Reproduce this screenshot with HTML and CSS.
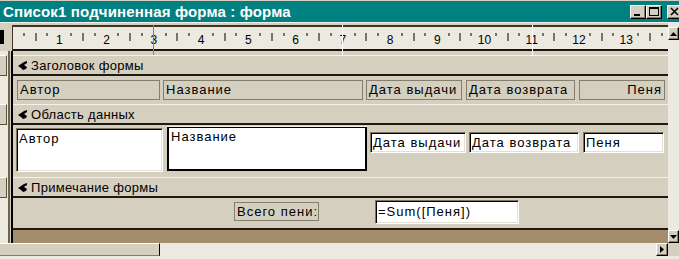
FILE: index.html
```html
<!DOCTYPE html>
<html lang="ru">
<head>
    <meta charset="UTF-8">
    <title>Список1 подчиненная форма : форма</title>
    <link rel="stylesheet" href="styles.css">
</head>
<body>
<div class="window">
    <div class="titlebar">
        <span class="title">Список1 подчиненная форма : форма</span>
        <div class="wbtns">
            <span class="wbtn"><svg width="14" height="12" viewBox="0 0 14 12"><rect x="3" y="8" width="6" height="2" fill="#000"/></svg></span>
            <span class="wbtn"><svg width="14" height="12" viewBox="0 0 14 12"><rect x="2.5" y="1.5" width="9" height="8" fill="none" stroke="#000"/><rect x="2" y="1" width="10" height="2" fill="#000"/></svg></span>
            <span class="wbtn close"><svg width="14" height="12" viewBox="0 0 14 12"><path d="M3 2 L10 9 M10 2 L3 9" stroke="#000" stroke-width="1.6"/></svg></span>
        </div>
    </div>

    <div class="workspace">
        <div class="corner"><span class="corner-mark"></span></div>

        <div class="ruler">
            <div class="ruler-scale">
                <div class="unit"><span class="q"><i class="t s"></i></span><span class="q"><i class="t b"></i></span><span class="q"><i class="t s"></i></span><span class="q"><b class="n">1</b></span></div>
                <div class="unit"><span class="q"><i class="t s"></i></span><span class="q"><i class="t b"></i></span><span class="q"><i class="t s"></i></span><span class="q"><b class="n">2</b></span></div>
                <div class="unit"><span class="q"><i class="t s"></i></span><span class="q"><i class="t b"></i></span><span class="q"><i class="t s"></i></span><span class="q"><b class="n">3</b></span></div>
                <div class="unit"><span class="q"><i class="t s"></i></span><span class="q"><i class="t b"></i></span><span class="q"><i class="t s"></i></span><span class="q"><b class="n">4</b></span></div>
                <div class="unit"><span class="q"><i class="t s"></i></span><span class="q"><i class="t b"></i></span><span class="q"><i class="t s"></i></span><span class="q"><b class="n">5</b></span></div>
                <div class="unit"><span class="q"><i class="t s"></i></span><span class="q"><i class="t b"></i></span><span class="q"><i class="t s"></i></span><span class="q"><b class="n">6</b></span></div>
                <div class="unit"><span class="q"><i class="t s"></i></span><span class="q"><i class="t b"></i></span><span class="q"><i class="t s"></i></span><span class="q"><b class="n">7</b></span></div>
                <div class="unit"><span class="q"><i class="t s"></i></span><span class="q"><i class="t b"></i></span><span class="q"><i class="t s"></i></span><span class="q"><b class="n">8</b></span></div>
                <div class="unit"><span class="q"><i class="t s"></i></span><span class="q"><i class="t b"></i></span><span class="q"><i class="t s"></i></span><span class="q"><b class="n">9</b></span></div>
                <div class="unit"><span class="q"><i class="t s"></i></span><span class="q"><i class="t b"></i></span><span class="q"><i class="t s"></i></span><span class="q"><b class="n">10</b></span></div>
                <div class="unit"><span class="q"><i class="t s"></i></span><span class="q"><i class="t b"></i></span><span class="q"><i class="t s"></i></span><span class="q"><b class="n">11</b></span></div>
                <div class="unit"><span class="q"><i class="t s"></i></span><span class="q"><i class="t b"></i></span><span class="q"><i class="t s"></i></span><span class="q"><b class="n">12</b></span></div>
                <div class="unit"><span class="q"><i class="t s"></i></span><span class="q"><i class="t b"></i></span><span class="q"><i class="t s"></i></span><span class="q"><b class="n">13</b></span></div>
                <div class="unit"><span class="q"><i class="t s"></i></span><span class="q"><i class="t b"></i></span><span class="q"><i class="t s"></i></span><span class="q"></span></div>
            </div>
            <span class="guide guide-gray"></span>
            <span class="guide guide-7"></span>
            <span class="guide guide-11"></span>
        </div>

        <div class="vscroll">
            <span class="sbtn"><svg width="7" height="4" viewBox="0 0 7 4"><polygon points="3.5,0 7,4 0,4" fill="#000"/></svg></span>
            <span class="sbtn"><svg width="7" height="4" viewBox="0 0 7 4"><polygon points="0,0 7,0 3.5,4" fill="#000"/></svg></span>
        </div>

        <div class="vruler">
            <div class="vr-track">
                <span class="vr-box"></span>
                <span class="vr-box vr-box-detail"></span>
                <span class="vr-box vr-box-footer"></span>
            </div>
            <div class="vr-edge"></div>
        </div>

        <div class="design">
            <div class="sec-head">
                <svg class="sec-arrow" width="10" height="9" viewBox="0 0 10 9"><polygon points="9,0 9,2 6,4 9,6 8,8 5,9 3,7 0,5 3,3 6,1" fill="#000"/></svg>
                Заголовок формы
            </div>
            <div class="sec-body head-body">
                <div class="lbl w-author">Автор</div>
                <div class="lbl w-name">Название</div>
                <div class="lbl w-issue">Дата выдачи</div>
                <div class="lbl w-return">Дата возврата</div>
                <div class="lbl w-fine">Пеня</div>
            </div>

            <div class="sec-head">
                <svg class="sec-arrow" width="10" height="9" viewBox="0 0 10 9"><polygon points="9,0 9,2 6,4 9,6 8,8 5,9 3,7 0,5 3,3 6,1" fill="#000"/></svg>
                Область данных
            </div>
            <div class="sec-body detail-body">
                <div class="tb tb-author">Автор</div>
                <div class="tb tb-name">Название</div>
                <div class="tb tb-issue">Дата выдачи</div>
                <div class="tb tb-return">Дата возврата</div>
                <div class="tb tb-fine">Пеня</div>
            </div>

            <div class="sec-head">
                <svg class="sec-arrow" width="10" height="9" viewBox="0 0 10 9"><polygon points="9,0 9,2 6,4 9,6 8,8 5,9 3,7 0,5 3,3 6,1" fill="#000"/></svg>
                Примечание формы
            </div>
            <div class="sec-body footer-body">
                <div class="lbl lbl-total">Всего пени:</div>
                <div class="tb tb-sum">=Sum([Пеня])</div>
            </div>

            <div class="beyond"></div>
        </div>
    </div>

    <div class="hscroll">
        <span class="hthumb"></span>
        <span class="htrack"></span>
        <span class="sbtn hbtn"><svg width="4" height="7" viewBox="0 0 4 7"><polygon points="0,0 4,3.5 0,7" fill="#000"/></svg></span>
        <span class="sizebox"></span>
    </div>
</div>
</body>
</html>
```

FILE: styles.css
```css
/* Окно конструктора формы */
body {
    margin: 0;
    background-color: #ece9e0;
    font-family: "Liberation Sans", Arial, sans-serif;
    color: #000;
}

.window {
    width: 679px;
    height: 259px;
    overflow: hidden;
    display: flex;
    flex-direction: column;
    background-color: #d5cfbf;
}

/* Заголовок окна */
.titlebar {
    height: 21px;
    flex-shrink: 0;
    border-top: 1px solid #d5cfbf;
    background-color: #008080;
    display: flex;
    align-items: center;
    justify-content: space-between;
    overflow: hidden;
}

.title {
    color: #fff;
    font-weight: bold;
    font-size: 15px;
    letter-spacing: 0.15px;
    padding-left: 3px;
    white-space: nowrap;
}

.wbtns {
    display: flex;
    margin-right: -4px;
}

.wbtn {
    width: 16px;
    height: 14px;
    box-sizing: border-box;
    background-color: #d5cfbf;
    border: 1px solid;
    border-color: #fff #000 #000 #fff;
    box-shadow: inset -1px -1px 0 #857d6d;
    display: flex;
}

.wbtn.close {
    margin-left: 5px;
}

/* Рабочая область */
.workspace {
    display: grid;
    grid-template-columns: 12px 1px 655px 11px;
    grid-template-rows: 29px 192px;
    box-shadow: inset 0 1px 0 #f4f1ea;
}

.corner {
    grid-column: 1;
    grid-row: 1;
}

.corner-mark {
    display: block;
    width: 4px;
    height: 14px;
    margin-top: 8px;
    background-color: #000;
}

/* Линейка */
.ruler {
    grid-column: 2 / 4;
    grid-row: 1;
    margin-top: 3px;
    height: 26px;
    box-sizing: border-box;
    border-top: 2px solid #3e3526;
    border-bottom: 2px solid #1a160f;
    border-left: 1px solid #3e3526;
    background-color: #ece9e0;
    position: relative;
}

.ruler-scale {
    display: flex;
    height: 100%;
    overflow: hidden;
    margin-left: -1px;
}

.unit {
    flex: 0 0 47.25px;
    display: flex;
}

.q {
    flex: 1;
    display: flex;
    justify-content: flex-end;
    align-items: flex-start;
}

.t {
    width: 1px;
    background-color: #000;
    margin-top: 6px;
    transform: translateX(50%);
}

.t.s {
    height: 3px;
}

.t.b {
    height: 8px;
}

.n {
    font-weight: normal;
    font-size: 12px;
    line-height: 12px;
    margin-top: 7px;
    transform: translateX(50%);
}

.guide {
    position: absolute;
    top: -2px;
    bottom: -6px;
    width: 1px;
    background-color: #fff;
}

.guide-gray {
    left: 140px;
    background-color: #8a7f68;
}

.guide-7 {
    left: 329px;
}

.guide-11 {
    left: 519px;
}

/* Полосы прокрутки */
.vscroll {
    grid-column: 4;
    grid-row: 1 / 3;
    display: flex;
    flex-direction: column;
    justify-content: space-between;
    padding-top: 5px;
    background-color: #ece9e0;
}

.sbtn {
    height: 13px;
    box-sizing: border-box;
    background-color: #d5cfbf;
    border: 1px solid;
    border-color: #fff #000 #000 #fff;
    box-shadow: inset -1px -1px 0 #857d6d;
    display: flex;
    align-items: center;
    justify-content: center;
}

.hscroll {
    height: 13px;
    flex-shrink: 0;
    display: flex;
    border-bottom: 3px solid #ece9e0;
    background-color: #ece9e0;
}

.hthumb {
    width: 160px;
    box-sizing: border-box;
    background-color: #d5cfbf;
    border-top: 1px solid #fff;
    border-bottom: 1px solid #857d6d;
    border-right: 1px solid #000;
}

.htrack {
    flex: 1;
}

.hbtn {
    width: 12px;
}

.sizebox {
    width: 11px;
    background-color: #d5cfbf;
}

/* Вертикальная линейка разделов */
.vruler {
    grid-column: 1 / 3;
    grid-row: 2;
    display: flex;
}

.vr-track {
    width: 8px;
    padding-top: 4px;
    display: flex;
    flex-direction: column;
    background-color: #ece9e0;
}

.vr-box {
    width: 7px;
    height: 21px;
    box-sizing: border-box;
    background-color: #d5cfbf;
    border-top: 1px solid #fff;
    border-bottom: 1px solid #5a5040;
    border-right: 1px solid #5a5040;
}

.vr-box-detail {
    margin-top: 28px;
}

.vr-box-footer {
    margin-top: 52px;
}

.vr-edge {
    width: 5px;
    box-sizing: border-box;
    border-left: 2px solid #6e6450;
    border-right: 2px solid #000;
    background-color: #d5cfbf;
}

/* Разделы формы */
.design {
    grid-column: 3;
    grid-row: 2;
    display: flex;
    flex-direction: column;
    padding-top: 4px;
    background-color: #d5cfbf;
}

.sec-head {
    height: 21px;
    flex-shrink: 0;
    box-sizing: border-box;
    border-top: 1px solid #f4f1ea;
    border-bottom: 2px solid #1f1a12;
    display: flex;
    align-items: center;
    gap: 3px;
    padding-left: 5px;
    font-size: 13px;
    letter-spacing: 0.3px;
}

.sec-body {
    display: flex;
    align-items: flex-start;
    flex-shrink: 0;
}

.head-body {
    height: 28px;
    padding: 4px 0 0 4px;
    box-sizing: border-box;
}

.detail-body {
    height: 52px;
    padding-left: 3px;
}

.footer-body {
    height: 30px;
    padding-left: 221px;
}

.lbl {
    height: 20px;
    box-sizing: border-box;
    border: 1px solid #857d6d;
    padding: 0 2px;
    font-size: 13px;
    line-height: 18px;
    letter-spacing: 1px;
    white-space: nowrap;
    overflow: hidden;
}

.w-author {
    width: 143px;
}

.w-name {
    width: 200px;
    margin-left: 3px;
}

.w-issue {
    width: 96px;
    margin-left: 3px;
}

.w-return {
    width: 109px;
    margin-left: 4px;
}

.w-fine {
    width: 86px;
    margin-left: 4px;
    text-align: right;
}

.tb {
    background-color: #fff;
    box-sizing: border-box;
    border: 1px solid;
    border-color: #7d7460 #fff #fff #7d7460;
    box-shadow: inset 1px 1px 0 #000, inset -1px -1px 0 #e4dfd3;
    padding: 2px 2px 0;
    font-size: 13px;
    line-height: 15px;
    letter-spacing: 1px;
    white-space: nowrap;
    overflow: hidden;
}

.tb-author {
    width: 147px;
    height: 44px;
    margin-top: 3px;
}

.tb-name {
    width: 200px;
    height: 44px;
    margin-left: 4px;
    margin-top: 2px;
    border-width: 1px 2px 2px 2px;
    border-color: #000;
    box-shadow: 0 -1px 0 #f4f1ea;
    padding-top: 1px;
}

.tb-issue {
    width: 96px;
    height: 21px;
    margin-left: 3px;
    margin-top: 7px;
}

.tb-return {
    width: 110px;
    height: 21px;
    margin-left: 3px;
    margin-top: 7px;
}

.tb-fine {
    width: 81px;
    height: 21px;
    margin-left: 4px;
    margin-top: 7px;
}

.lbl-total {
    width: 85px;
    height: 19px;
    margin-top: 4px;
    line-height: 17px;
}

.tb-sum {
    width: 144px;
    height: 24px;
    margin-left: 56px;
    margin-top: 2px;
    padding-top: 3px;
}

.beyond {
    flex: 1;
    border-top: 2px solid #1f1a12;
    background-color: #a38d6a;
}
```
